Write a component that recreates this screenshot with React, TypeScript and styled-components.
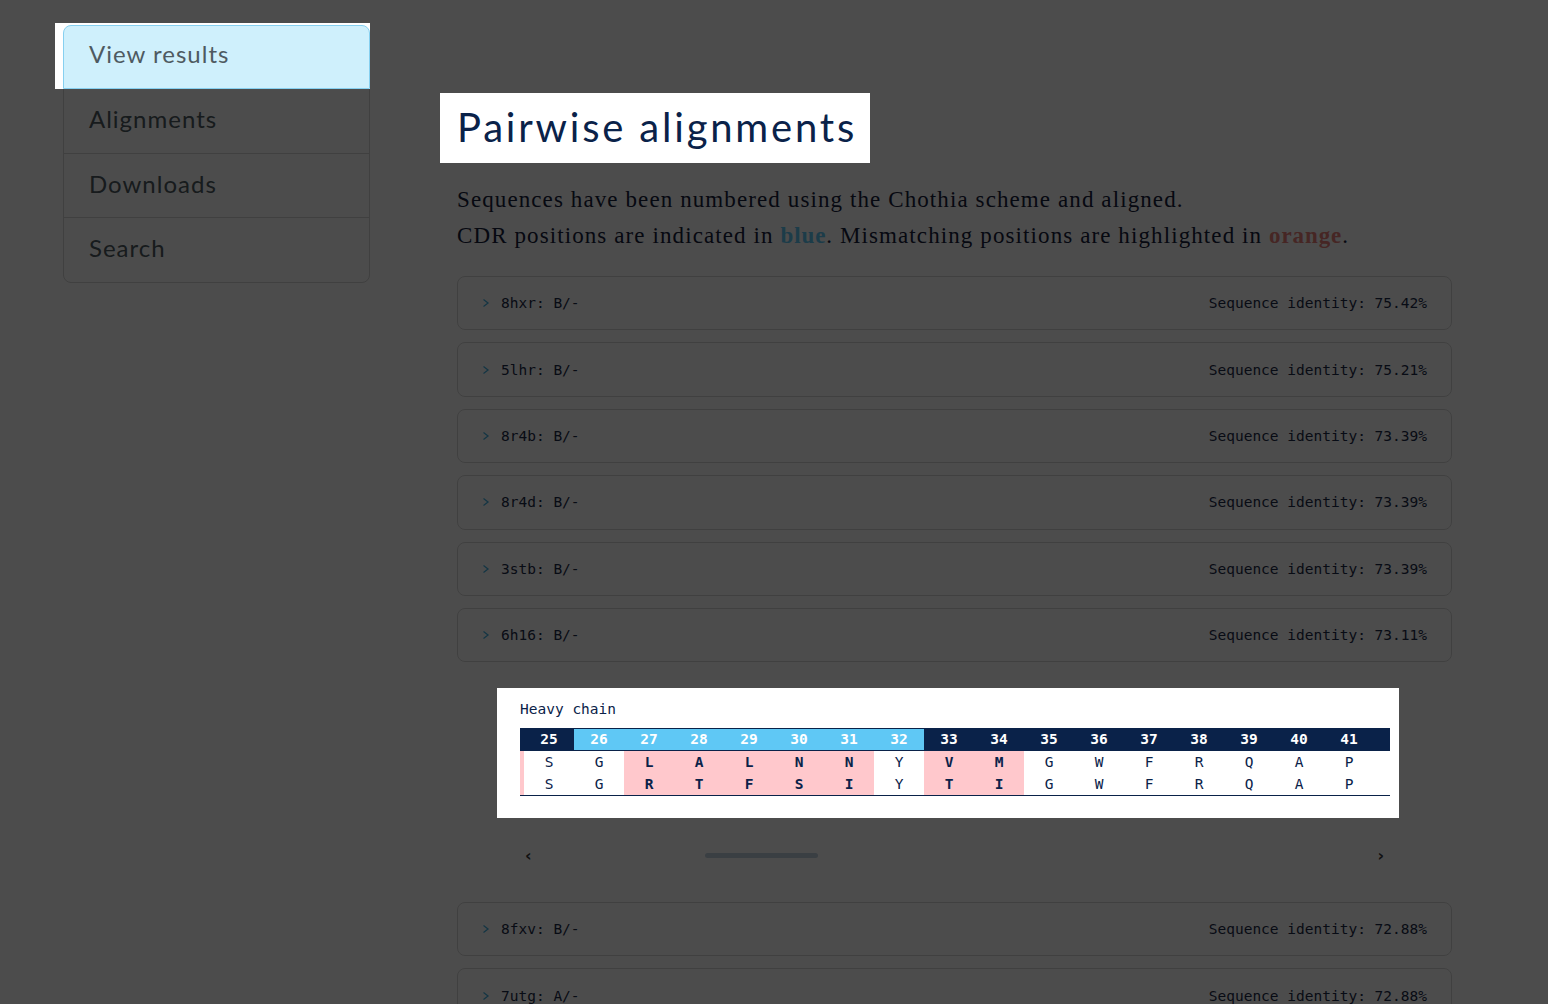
import React from "react";
import styled, { createGlobalStyle } from "styled-components";

const NAVY = "#0a2249";
const CDR = "#5fc8f5";
const MISMATCH = "#ffc8cc";
const MONO = `"DejaVu Sans Mono", "Liberation Mono", monospace`;
const ROUND = `"Lato", "Noto Sans", sans-serif`;
const SLAB = `"Liberation Serif", "DejaVu Serif", serif`;

const GlobalStyle = createGlobalStyle`
  html, body { margin: 0; padding: 0; background: #ffffff; }
  body { font-family: ${ROUND}; color: #212529; }
`;

const Overlay = styled.div`
  position: fixed;
  inset: 0;
  background: rgba(0, 0, 0, 0.7);
  z-index: 10;
  pointer-events: none;
`;

const Spotlight = styled.div<{ $inset: string }>`
  position: relative;
  z-index: 20;
  &::before {
    content: "";
    position: absolute;
    inset: ${(p) => p.$inset};
    background: #ffffff;
    z-index: -1;
  }
`;

const Page = styled.div`
  display: flex;
  align-items: flex-start;
  padding: 25px 0 40px 63px;
`;

const Sidebar = styled.nav`
  width: 307px;
  flex: none;
  display: flex;
  flex-direction: column;
`;

const NavItem = styled.div<{ $active?: boolean; $first?: boolean; $last?: boolean }>`
  box-sizing: border-box;
  height: ${(p) => (p.$first ? "64px" : "65.5px")};
  display: flex;
  align-items: center;
  padding: 0 0 ${(p) => (p.$first ? "8px" : "4px")} 25px;
  margin-top: ${(p) => (p.$first ? "0" : "-1px")};
  border: 1px solid ${(p) => (p.$active ? "#86d0f0" : "#d5d5d5")};
  border-radius: ${(p) => (p.$first ? "8px 8px 0 0" : p.$last ? "0 0 8px 8px" : "0")};
  background: ${(p) => (p.$active ? "#cff0fc" : "#ffffff")};
  color: #4e5a61;
  font-family: ${ROUND};
  font-size: 24px;
  letter-spacing: 1px;
`;

const Main = styled.main`
  margin-left: 87px;
  width: 995px;
  flex: none;
`;

const TitleSpot = styled(Spotlight)`
  width: fit-content;
  margin-top: 79px;
`;

const Title = styled.h1`
  margin: 0;
  font-family: ${ROUND};
  font-weight: 400;
  font-size: 40px;
  line-height: 46px;
  letter-spacing: 2.8px;
  color: ${NAVY};
`;

const Description = styled.p`
  margin: 32px 0 22px;
  font-family: ${SLAB};
  font-size: 23px;
  line-height: 36px;
  color: #16203a;
  letter-spacing: 1.1px;
  word-spacing: 0;
`;

const Accent = styled.b<{ $color: string }>`
  color: ${(p) => p.$color};
  letter-spacing: 0.9px;
`;

const AccRow = styled.div`
  box-sizing: border-box;
  height: 54.4px;
  margin-bottom: 12px;
  padding: 0 24px;
  display: flex;
  align-items: center;
  justify-content: space-between;
  border: 1px solid #d8d8d8;
  border-radius: 8px;
  background: #ffffff;
  font-family: ${MONO};
  font-size: 14.5px;
  color: #1b2b47;
`;

const AccLabel = styled.div`
  display: flex;
  align-items: center;
  gap: 11px;
`;

const Chevron = styled.svg`
  width: 8px;
  height: 10px;
  flex: none;
`;

const Panel = styled(Spotlight)`
  margin: 25.6px 53px 0 40px;
  padding: 11px 9px 22px 23px;
`;

const ChainLabel = styled.div`
  font-family: ${MONO};
  font-size: 14.5px;
  line-height: 20px;
  color: ${NAVY};
  margin-bottom: 9px;
`;

const SeqGrid = styled.div<{ $cols: string }>`
  display: grid;
  grid-template-columns: ${(p) => p.$cols};
  border-bottom: 1px solid ${NAVY};
  font-family: ${MONO};
  font-size: 14.5px;
`;

const HeadCell = styled.div<{ $cdr?: boolean }>`
  box-sizing: border-box;
  height: 23px;
  display: flex;
  align-items: center;
  justify-content: center;
  border-top: 1px solid ${NAVY};
  border-bottom: 1px solid ${NAVY};
  background: ${(p) => (p.$cdr ? CDR : NAVY)};
  color: #ffffff;
  font-weight: 700;
  overflow: hidden;
`;

const SeqCell = styled.div<{ $mismatch?: boolean }>`
  height: 22px;
  display: flex;
  align-items: center;
  justify-content: center;
  background: ${(p) => (p.$mismatch ? MISMATCH : "#ffffff")};
  color: ${NAVY};
  font-weight: ${(p) => (p.$mismatch ? 700 : 400)};
  overflow: hidden;
`;

const ScrollRow = styled.div`
  display: flex;
  align-items: center;
  height: 20px;
  margin: 28px 68px 36px 68px;
  color: #3a3a3a;
  font-family: "DejaVu Sans", sans-serif;
  font-weight: 700;
  font-size: 16px;
`;

const Track = styled.div`
  flex: 1;
  display: flex;
  align-items: center;
  margin: 0 9px;
`;

const Thumb = styled.div`
  height: 5px;
  border-radius: 3px;
  background: #c4d2e0;
`;

type Hit = { id: string; chain: string; identity: string };

const before: Hit[] = [
  { id: "8hxr", chain: "B/-", identity: "75.42%" },
  { id: "5lhr", chain: "B/-", identity: "75.21%" },
  { id: "8r4b", chain: "B/-", identity: "73.39%" },
  { id: "8r4d", chain: "B/-", identity: "73.39%" },
  { id: "3stb", chain: "B/-", identity: "73.39%" },
  { id: "6h16", chain: "B/-", identity: "73.11%" },
];
const after: Hit[] = [
  { id: "8fxv", chain: "B/-", identity: "72.88%" },
  { id: "7utg", chain: "A/-", identity: "72.88%" },
  { id: "7kql", chain: "H/L", identity: "72.66%" },
];

const numbers = Array.from({ length: 17 }, (_, i) => 25 + i);
const query = "SGLALNNYVMGWFRQAP".split("");
const target = "SGRTFSIYTIGWFRQAP".split("");
const cdr = new Set([26, 27, 28, 29, 30, 31, 32]);

const AccordionRow = ({ hit }: { hit: Hit }) => (
  <AccRow>
    <AccLabel>
      <Chevron viewBox="0 0 8 10">
        <polyline points="1.5,1.5 6,5 1.5,8.5" fill="none" stroke="#45b2e2" strokeWidth="1.3" />
      </Chevron>
      <span>
        {hit.id}: {hit.chain}
      </span>
    </AccLabel>
    <span>Sequence identity: {hit.identity}</span>
  </AccRow>
);

const Alignment = () => {
  const cols = `4px repeat(${numbers.length}, 50px) 16px`;
  // horizontal scroll state of the alignment viewer
  const thumbWidth = 113;
  const thumbOffset = 164;
  return (
    <>
      <Panel $inset="0">
        <ChainLabel>Heavy chain</ChainLabel>
        <SeqGrid $cols={cols}>
          <HeadCell />
          {numbers.map((n) => (
            <HeadCell key={n} $cdr={cdr.has(n)}>
              {n}
            </HeadCell>
          ))}
          <HeadCell />
          {[query, target].map((seq, r) => (
            <React.Fragment key={r}>
              <SeqCell $mismatch />
              {seq.map((aa, i) => (
                <SeqCell key={i} $mismatch={query[i] !== target[i]}>
                  {aa}
                </SeqCell>
              ))}
              <SeqCell />
            </React.Fragment>
          ))}
        </SeqGrid>
      </Panel>
      <ScrollRow>
        <span>‹</span>
        <Track>
          <Thumb style={{ marginLeft: thumbOffset, width: thumbWidth }} />
        </Track>
        <span>›</span>
      </ScrollRow>
    </>
  );
};

export default function App() {
  return (
    <>
      <GlobalStyle />
      <Page>
        <Sidebar>
          <Spotlight $inset="-2px 0 0 -8px">
            <NavItem $active $first>
              View results
            </NavItem>
          </Spotlight>
          <NavItem>Alignments</NavItem>
          <NavItem>Downloads</NavItem>
          <NavItem $last>Search</NavItem>
        </Sidebar>
        <Main>
          <TitleSpot $inset="-11px -13px -13px -17px">
            <Title>Pairwise alignments</Title>
          </TitleSpot>
          <Description>
            Sequences have been numbered using the Chothia scheme and aligned.
            <br />
            CDR positions are indicated in <Accent $color={CDR}>blue</Accent>. Mismatching positions are
            highlighted in <Accent $color="#ea7f7b">orange</Accent>.
          </Description>
          {before.map((h) => (
            <AccordionRow key={h.id} hit={h} />
          ))}
          <Alignment />
          {after.map((h) => (
            <AccordionRow key={h.id} hit={h} />
          ))}
        </Main>
      </Page>
      <Overlay />
    </>
  );
}
